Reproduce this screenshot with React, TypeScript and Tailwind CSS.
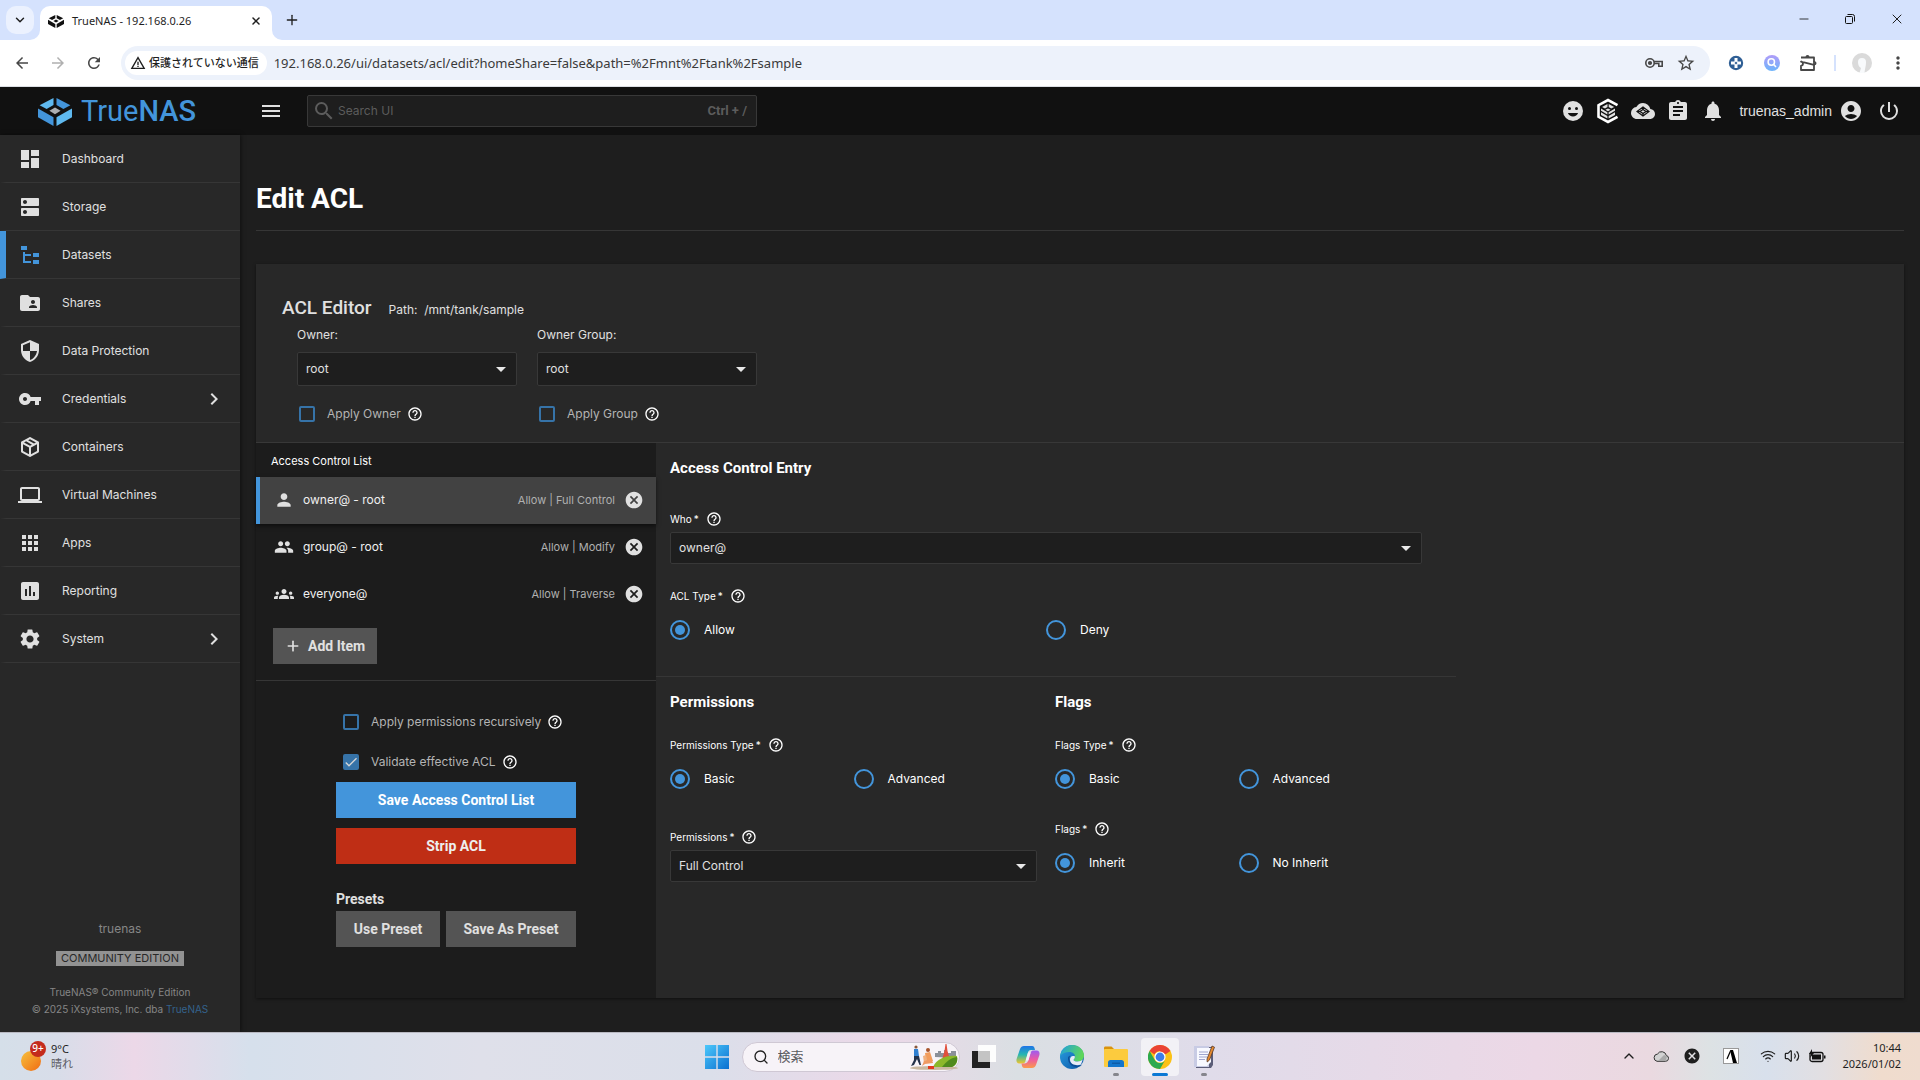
import { ReactNode, useState } from "react";
import classNames from "clsx";
import {
  MdAccountCircle,
  MdApps,
  MdArrowBack,
  MdArrowDropDown,
  MdArrowForward,
  MdAssessment,
  MdAssignment,
  MdCancel,
  MdCheck,
  MdChevronRight,
  MdDashboard,
  MdDns,
  MdFolderShared,
  MdGroup,
  MdGroups,
  MdHelpOutline,
  MdLaptop,
  MdMenu,
  MdMoreVert,
  MdNotifications,
  MdPerson,
  MdPowerSettingsNew,
  MdRefresh,
  MdSearch,
  MdSecurity,
  MdSettings,
  MdStarOutline,
  MdVpnKey,
  MdWarningAmber,
} from "react-icons/md";
import {
  ChevronDown,
  ChevronUp,
  Minus,
  Plus,
  Search,
  Volume2,
  Wifi,
  X,
} from "lucide-react";

const uiFont = "font-['Inter','Noto_Sans_CJK_JP',sans-serif]";
const headFont = "font-['Roboto','Liberation_Sans',sans-serif]";
const osFont = "font-['Noto_Sans','Noto_Sans_CJK_JP',sans-serif]";

/* ---------- drawings ---------- */

function TrueNasMark({ mono, className }: { mono?: boolean; className?: string }) {
  const dark = mono ? "#111" : "#4395db";
  const light = mono ? "#111" : "#5fb9ef";
  return (
    <svg viewBox="0 0 34 28" className={className} aria-hidden="true">
      <path d="M15.500 0v7L8.600 11 1.600 7.200z" fill={light} />
      <path d="M18.500 0v7l6.900 4 7-3.800z" fill={dark} />
      <path d="M17 9.500l5.600 3.300L17 16.200l-5.600-3.400z" fill={mono ? "#111" : "#aeb0b2"} />
      <path d="M0 10.500l15.500 8.700V28L0 19.200z" fill={dark} />
      <path d="M34 10.500l-15.500 8.700V28L34 19.200z" fill={light} />
    </svg>
  );
}

function FileTreeIcon() {
  return (
    <svg viewBox="0 0 24 24" className="size-6" fill="currentColor" aria-hidden="true">
      <path d="M3,3H9V7H3V3M15,10H21V14H15V10M15,17H21V21H15V17M13,13H7V18H13V20H7L5,20V9H7V11H13V13Z" />
    </svg>
  );
}

function PackageIcon() {
  return (
    <svg viewBox="0 0 24 24" className="size-6" fill="currentColor" aria-hidden="true">
      <path d="M21,16.5C21,16.88 20.79,17.21 20.47,17.38L12.57,21.82C12.41,21.94 12.21,22 12,22C11.79,22 11.59,21.94 11.43,21.82L3.53,17.38C3.21,17.21 3,16.88 3,16.5V7.5C3,7.12 3.21,6.79 3.53,6.62L11.43,2.18C11.59,2.06 11.79,2 12,2C12.21,2 12.41,2.06 12.57,2.18L20.47,6.62C20.79,6.79 21,7.12 21,7.5V16.5M12,4.15L10.11,5.22L16,8.61L17.96,7.5L12,4.15M6.04,7.5L12,10.85L13.96,9.75L8.08,6.35L6.04,7.5M5,15.91L11,19.29V12.58L5,9.21V15.91M19,15.91V9.21L13,12.58V19.29L19,15.91Z" />
    </svg>
  );
}

function SmileIcon() {
  return (
    <svg viewBox="0 0 24 24" className="size-6" aria-hidden="true">
      <circle cx="12" cy="12" r="10" fill="#e0e0e0" />
      <circle cx="8.500" cy="9.500" r="1.500" fill="#111" />
      <circle cx="15.500" cy="9.500" r="1.500" fill="#111" />
      <path d="M6.900 14h10.200a5.500 5.500 0 0 1-10.200 0z" fill="#111" />
    </svg>
  );
}

function ConnectIcon() {
  return (
    <svg viewBox="0 0 24 26" className="h-[26px] w-6" aria-hidden="true">
      <path
        d="M21.500 7.200L12 2 2.500 7.200v11.600L12 24l9.500-5.200"
        fill="none"
        stroke="#fff"
        strokeWidth="2.600"
      />
      <path d="M11.500 6v3L9 10.400 6 8.900zM12.700 6v3l2.500 1.400 3-1.500zM12 10.400l2.600 1.400-2.600 1.500-2.600-1.500z" fill="#e0e0e0" />
      <path d="M5 10.500l6.400 3.700v2.200L5 12.800zM5 14.200l6.400 3.700v2.700L5 17zM19 10.500l-6.400 3.700v2.200l6.400-3.600zM19 14.200l-6.400 3.700v2.700L19 17z" fill="#e0e0e0" />
    </svg>
  );
}

function CloudMarkIcon() {
  return (
    <svg viewBox="0 0 24 24" className="size-6" aria-hidden="true">
      <path
        d="M19.350 10.040A7.490 7.490 0 0 0 12 4C9.110 4 6.600 5.640 5.350 8.040A5.990 5.990 0 0 0 0 14c0 3.310 2.690 6 6 6h13c2.760 0 5-2.240 5-5 0-2.640-2.050-4.780-4.650-4.960z"
        fill="#e0e0e0"
      />
      <g fill="none" stroke="#111" strokeWidth="1.200">
        <path d="M12 8l6 4.500-6 4.500-6-4.500zM12 8v2.500M12 17v-2.500M6 12.500h3M18 12.500h-3" />
        <path d="M12 10.500l3 2-3 2-3-2z" />
      </g>
    </svg>
  );
}

function PuzzleIcon() {
  return (
    <svg viewBox="0 0 20 20" className="size-5" fill="none" stroke="currentColor" strokeWidth="1.800" aria-hidden="true">
      <path d="M3 4.500h13v4.200M16 11.800V17H3v-4.200c2.600-.4 2.600-3.700 0-4.100z" strokeLinejoin="round" />
      <path d="M7.500 4a2 2 0 0 1 4 0zM16.500 8.300a2 2 0 0 1 0 4z" fill="currentColor" stroke="none" />
      <path d="M16 8v4.500" />
    </svg>
  );
}

function WindowsLogo() {
  return (
    <svg viewBox="0 0 24 24" className="size-6" aria-hidden="true">
      <defs>
        <linearGradient id="win" x1="0" y1="0" x2="24" y2="24" gradientUnits="userSpaceOnUse">
          <stop offset="0" stopColor="#4cc8fb" />
          <stop offset="1" stopColor="#0a6fd0" />
        </linearGradient>
      </defs>
      <path d="M0 0h11.300v11.300H0zM12.700 0H24v11.300H12.700zM0 12.700h11.300V24H0zM12.700 12.700H24V24H12.700z" fill="url(#win)" />
    </svg>
  );
}

// runners in a park, the little picture inside the search pill
function SearchScene() {
  return (
    <svg viewBox="0 0 48 26" className="h-[26px] w-12" aria-hidden="true">
      <ellipse cx="24" cy="24" rx="24" ry="2" fill="#c9b8a0" />
      <path d="M25 13V9h3V7h3v2h3V6h3v3h4V7h5v7z" fill="#8b9099" />
      <path d="M35.500 0h1l1 7 2 7h-7l2-7z" fill="#e0503c" />
      <path d="M23 23c4-8 12-12 24-11 1 6-1 10-6 11z" fill="#8cb82a" />
      <path d="M32 23c4-5 8-9 15-10 1 4-1 8-5 10z" fill="#4f8a1d" />
      <circle cx="6" cy="3" r="1.600" fill="#8a5a3c" />
      <path d="M4 5h4l1 7H4z" fill="#2f7fd0" />
      <path d="M4 12h5l2 9H9.500L7 15l-3 6-3 1 3-6z" fill="#24324a" />
      <circle cx="18" cy="6" r="2" fill="#a8552c" />
      <path d="M15 9l5-1 3 9h-7z" fill="#f29c5c" />
      <path d="M13 12l3-1 1 5-3 3z" fill="#f0b080" />
      <path d="M14 17l8-1 1 3-8 1-3 2z" fill="#ef9a63" />
      <path d="M18 22h6v3h-6z" fill="#e2391f" />
    </svg>
  );
}

function TaskViewIcon() {
  return (
    <svg viewBox="0 0 24 24" className="size-6" aria-hidden="true">
      <rect x="0" y="6" width="18" height="17" fill="#222" />
      <rect x="6" y="0" width="18" height="17" fill="#fdfdfd" />
      <rect x="6" y="6" width="12" height="11" fill="#c4c4c4" />
    </svg>
  );
}

function CopilotIcon() {
  return (
    <svg viewBox="0 0 24 24" className="size-6" aria-hidden="true">
      <defs>
        <linearGradient id="cpA" x1="0" y1="0" x2="0" y2="1">
          <stop offset="0" stopColor="#1d74e8" />
          <stop offset="0.500" stopColor="#27b8b0" />
          <stop offset="1" stopColor="#f2c52a" />
        </linearGradient>
        <linearGradient id="cpB" x1="0" y1="0" x2="0" y2="1">
          <stop offset="0" stopColor="#9c5cf0" />
          <stop offset="0.500" stopColor="#ec5aa4" />
          <stop offset="1" stopColor="#fb9a4a" />
        </linearGradient>
      </defs>
      <path d="M8 1h8c2 0 2.500 1.500 3 4h-4c-2 0-2.600 1-3 2.500L9.500 16c-.6 2-1.500 2.500-3.500 2.500H3.500C1 18.500 0 16.500.6 14L4 4c.8-2 2-3 4-3z" fill="url(#cpA)" />
      <path d="M16 23H8.500c-2 0-2.500-1.500-3-4.500H8c2.500 0 3.500-1 4-2.500L14.500 8c.6-2 1.500-2.500 3.500-2.500h2.500c2.500 0 3.500 2 2.900 4.500L20 20c-.8 2-2 3-4 3z" fill="url(#cpB)" />
      <path d="M12 7.500h2.700L12.400 15.500H9.700z" fill="#f4f1f6" />
    </svg>
  );
}

function EdgeIcon() {
  return (
    <svg viewBox="0 0 24 24" className="size-6" aria-hidden="true">
      <defs>
        <linearGradient id="edA" x1="0" y1="0" x2="1" y2="0.300">
          <stop offset="0" stopColor="#1f9fe0" />
          <stop offset="1" stopColor="#5ed65a" />
        </linearGradient>
        <linearGradient id="edB" x1="0" y1="0" x2="1" y2="1">
          <stop offset="0" stopColor="#2aa0e2" />
          <stop offset="1" stopColor="#0b54a5" />
        </linearGradient>
      </defs>
      <circle cx="12" cy="12" r="12" fill="url(#edB)" />
      <path d="M.3 11C1 4.500 6 0 12 0c7 0 12 5 12 10.500 0 4-3 6-6.500 6-2.500 0-4-.8-4-1.800 0-.8 1.500-1.200 1.500-3.200 0-2.300-2-4.500-5.500-4.500C5.500 7 2 8.500.3 11z" fill="url(#edA)" />
      <path d="M8 13c0 5 3.500 9 8.500 9 2 0 4-.6 5.500-2-2 .8-11 1-12.500-5-.4-2 .2-3.500 1-4.500C9 11 8 12 8 13z" fill="#0d4d96" />
      <path d="M15 11.500c0-.5 0 2-1.500 3.200 0 1 1.500 1.800 4 1.800 2 0 4-.7 5.200-2L21 19.500c-4 1.500-10.500.5-11-4.500-.2-3 2-5 5-3.500z" fill="#e8ecf6" />
    </svg>
  );
}

function ExplorerIcon() {
  return (
    <svg viewBox="0 0 24 24" className="size-6" aria-hidden="true">
      <path d="M0 3c0-1 .5-1.500 1.500-1.500h6L10 4v4H0z" fill="#d9920c" />
      <rect x="0" y="4" width="24" height="18" rx="1" fill="#fccb3e" />
      <path d="M4 22v-4.500c0-1.500 1-2.500 2.500-2.500h11c1.500 0 2.500 1 2.500 2.500V22z" fill="#1476cc" />
      <rect x="8" y="17.500" width="8" height="1.500" fill="#0e5ca8" />
    </svg>
  );
}

function ChromeIcon() {
  return (
    <svg viewBox="0 0 24 24" className="size-6" aria-hidden="true">
      <circle cx="12" cy="12" r="12" fill="#fbc116" />
      <path d="M1.600 6A12 12 0 0 1 22.400 6H12a6 6 0 0 0-5.500 3.500z" fill="#ea4335" />
      <path d="M1.600 6A12 12 0 0 0 12 24l5.200-9a6 6 0 0 1-10.400 0z" fill="#2da94f" />
      <path d="M22.400 6H12v3h6z" fill="#ea4335" />
      <circle cx="12" cy="12" r="5.600" fill="#fff" />
      <circle cx="12" cy="12" r="4.400" fill="#3e7de8" />
    </svg>
  );
}

function NotepadIcon() {
  return (
    <svg viewBox="0 0 24 24" className="size-6" aria-hidden="true">
      <path d="M4 2h17v18l-2 3H4z" fill="#5b5d78" />
      <path d="M2 1h15v21H2z" fill="#c8cbe4" />
      <path d="M5 3h14v14l-4 4H5z" fill="#f8f9ff" />
      <path d="M7 7h9M7 9.500h9M7 12h8M7 14.500h6" stroke="#9fa4cc" strokeWidth="1" />
      <path d="M20 1l2.500 1.200L17.500 15l-2.300 2-.2-3z" fill="#e58a2f" stroke="#55372a" strokeWidth="0.800" />
    </svg>
  );
}

/* ---------- browser ---------- */

function IconButton({ label, children }: { label: string; children: ReactNode }) {
  return (
    <button type="button" aria-label={label} className="flex shrink-0 items-center justify-center">
      {children}
    </button>
  );
}

function BrowserChrome() {
  return (
    <div className={classNames("text-[#1f1f1f]", osFont)}>
      <div className="flex h-10 items-end bg-[#d5e2fd]">
        <button
          type="button"
          aria-label="Search tabs"
          className="mb-[6px] ml-[6px] flex size-7 items-center justify-center rounded-[10px] bg-[#ebf1fe]"
        >
          <ChevronDown className="size-[14px]" strokeWidth={2.5} />
        </button>
        <svg viewBox="0 0 10 10" className="ml-[-4px] size-[10px]" aria-hidden="true">
          <path d="M10 0v10H0A10 10 0 0 0 10 0z" fill="#fff" />
        </svg>
        <div className="flex h-[34px] w-[232px] items-center rounded-t-[10px] bg-white px-2 pb-1">
          <TrueNasMark mono className="h-[17px] w-4" />
          <span className="ml-2 text-[11px]">TrueNAS - 192.168.0.26</span>
          <button type="button" aria-label="Close tab" className="mr-[2px] ml-auto">
            <X className="size-3" strokeWidth={3} />
          </button>
        </div>
        <svg viewBox="0 0 10 10" className="size-[10px]" aria-hidden="true">
          <path d="M0 0v10h10A10 10 0 0 1 0 0z" fill="#fff" />
        </svg>
        <button type="button" aria-label="New tab" className="mb-3 ml-[2px]">
          <Plus className="size-4" strokeWidth={2} />
        </button>
        <div className="mb-[13px] ml-auto flex items-center gap-8 pr-[15px]">
          <IconButton label="Minimize">
            <Minus className="size-[14px]" strokeWidth={1.5} />
          </IconButton>
          <IconButton label="Restore">
            <svg viewBox="0 0 14 14" className="size-[14px]" fill="none" stroke="#111" aria-hidden="true">
              <rect x="2.500" y="4.500" width="7" height="7" rx="1" />
              <path d="M4.500 2.500h5a2 2 0 0 1 2 2v5" />
            </svg>
          </IconButton>
          <IconButton label="Close">
            <X className="size-4" strokeWidth={1.5} />
          </IconButton>
        </div>
      </div>

      <div className="flex h-[47px] items-center border-b border-[#dcdfe4] bg-white pr-3 pl-[13px] text-[#474747]">
        <div className="flex gap-[18px]">
          <IconButton label="Back">
            <MdArrowBack className="size-[18px]" />
          </IconButton>
          <IconButton label="Forward">
            <MdArrowForward className="size-[18px] text-[#b0b0b0]" />
          </IconButton>
          <IconButton label="Reload">
            <MdRefresh className="size-[18px]" />
          </IconButton>
        </div>
        <div className="ml-[18px] flex h-[34px] flex-1 items-center rounded-full bg-[#edf2fb] pr-[14px] pl-1">
          <button
            type="button"
            className="flex h-6 items-center gap-[3px] rounded-full bg-white pr-2 pl-[5px] text-[11px] font-medium text-[#1f1f1f]"
          >
            <MdWarningAmber className="size-4" />
            保護されていない通信
          </button>
          <input
            aria-label="Address"
            className="ml-[7px] h-6 min-w-0 flex-1 bg-transparent text-[13px] text-[#3a3a3a] outline-none"
            defaultValue="192.168.0.26/ui/datasets/acl/edit?homeShare=false&path=%2Fmnt%2Ftank%2Fsample"
          />
          <div className="flex items-center gap-3">
            <IconButton label="Passwords">
              <svg viewBox="0 0 20 20" className="size-5" fill="none" stroke="currentColor" strokeWidth="1.600" aria-hidden="true">
                <circle cx="6" cy="10" r="4.200" />
                <circle cx="6" cy="10" r="1.300" fill="currentColor" />
                <path d="M10 8.500h8.200v4.700h-3.400v-2.700H10" />
              </svg>
            </IconButton>
            <IconButton label="Bookmark">
              <MdStarOutline className="size-5" />
            </IconButton>
          </div>
        </div>
        <div className="ml-[18px] flex items-center">
          <IconButton label="Extension">
            <svg viewBox="0 0 16 16" className="size-4" aria-hidden="true">
              <circle cx="8" cy="8" r="7.200" fill="#2f5f95" />
              <path d="M8 3v10M3 8h10" stroke="#fff" strokeWidth="3" />
              <path d="M8 6.500L9.500 8 8 9.500 6.500 8z" fill="#2f5f95" />
            </svg>
          </IconButton>
          <span className="ml-5">
            <IconButton label="Lens">
              <svg viewBox="0 0 16 16" className="size-4" aria-hidden="true">
                <defs>
                  <linearGradient id="lens" x1="0" y1="0" x2="0" y2="1">
                    <stop offset="0" stopColor="#b09cf8" />
                    <stop offset="1" stopColor="#6db4fb" />
                  </linearGradient>
                </defs>
                <circle cx="8" cy="8" r="8" fill="url(#lens)" />
                <circle cx="7.300" cy="7" r="3.200" fill="none" stroke="#fff" strokeWidth="1.500" />
                <path d="M9.700 9.500l2.300 2.500" stroke="#fff" strokeWidth="1.600" />
              </svg>
            </IconButton>
          </span>
          <span className="ml-[18px]">
            <IconButton label="Extensions">
              <PuzzleIcon />
            </IconButton>
          </span>
          <span className="mx-4 h-4 w-[2px] bg-[#d5e2fd]" />
          <IconButton label="Profile">
            <svg viewBox="0 0 20 20" className="size-5" aria-hidden="true">
              <circle cx="10" cy="10" r="10" fill="#dadada" />
              <path d="M6 9a4 4 0 0 1 8 0c0 4-1 6-1.500 11h-5L9 15C7 14 6 12 6 9z" fill="#f8fafc" />
            </svg>
          </IconButton>
          <span className="ml-4">
            <IconButton label="Menu">
              <MdMoreVert className="size-5" />
            </IconButton>
          </span>
        </div>
      </div>
    </div>
  );
}

/* ---------- TrueNAS shell ---------- */

function TopBar() {
  return (
    <header className="flex h-12 items-center bg-[#111111] text-[#e0e0e0]">
      <a href="#" className="flex h-full w-60 items-center pt-px pl-[38px] text-[#4395db]">
        <TrueNasMark className="h-7 w-[34px]" />
        <span className={classNames("ml-[9px] text-[29px] leading-none", headFont)}>
          True<span className="font-medium">NAS</span>
        </span>
      </a>
      <button type="button" aria-label="Toggle menu" className="ml-[19px]">
        <MdMenu className="size-6" />
      </button>
      <label className="ml-6 flex h-8 w-[450px] items-center rounded-[2px] border border-[#383838] bg-[#1e1e1e] pr-[9px] pl-1 text-[#5c5c5c]">
        <MdSearch className="size-6" />
        <input
          type="text"
          aria-label="Search UI"
          placeholder="Search UI"
          className="ml-[2px] min-w-0 flex-1 bg-transparent text-xs outline-none placeholder:text-[#5c5c5c]"
        />
        <span className={classNames("text-[13px] font-bold", headFont)}>Ctrl + /</span>
      </label>
      <div className="mr-[19px] ml-auto flex items-center gap-[11px]">
        <IconButton label="Feedback">
          <SmileIcon />
        </IconButton>
        <IconButton label="TrueNAS Connect">
          <ConnectIcon />
        </IconButton>
        <IconButton label="TrueCommand">
          <CloudMarkIcon />
        </IconButton>
        <IconButton label="Jobs">
          <MdAssignment className="size-6" />
        </IconButton>
        <IconButton label="Alerts">
          <MdNotifications className="size-6" />
        </IconButton>
        <button
          type="button"
          className="ml-[3px] flex items-center gap-[7px] font-['Liberation_Sans',Arial,sans-serif] text-sm"
        >
          truenas_admin
          <MdAccountCircle className="size-6" />
        </button>
        <span className="ml-[3px]">
          <IconButton label="Power">
            <MdPowerSettingsNew className="size-6" />
          </IconButton>
        </span>
      </div>
    </header>
  );
}

const navItems: { label: string; icon: ReactNode; nested?: boolean; active?: boolean }[] = [
  { label: "Dashboard", icon: <MdDashboard className="size-6" /> },
  { label: "Storage", icon: <MdDns className="size-6" /> },
  { label: "Datasets", icon: <FileTreeIcon />, active: true },
  { label: "Shares", icon: <MdFolderShared className="size-6" /> },
  { label: "Data Protection", icon: <MdSecurity className="size-6" /> },
  { label: "Credentials", icon: <MdVpnKey className="size-6" />, nested: true },
  { label: "Containers", icon: <PackageIcon /> },
  { label: "Virtual Machines", icon: <MdLaptop className="size-6" /> },
  { label: "Apps", icon: <MdApps className="size-6" /> },
  { label: "Reporting", icon: <MdAssessment className="size-6" /> },
  { label: "System", icon: <MdSettings className="size-6" />, nested: true },
];

function Sidebar() {
  return (
    <aside className="flex w-60 shrink-0 flex-col bg-[#282828] text-[#e0e0e0] shadow-[1px_0_4px_rgba(0,0,0,0.5)]">
      <nav>
        {navItems.map((item) => (
          <a
            key={item.label}
            href="#"
            className={classNames(
              "flex h-12 items-center border-b border-l-[6px] border-b-[#363636] pr-[14px] pl-3 text-xs",
              item.active ? "border-l-[#4395db]" : "border-l-transparent"
            )}
          >
            <span className={item.active ? "text-[#4395db]" : ""}>{item.icon}</span>
            <span className="ml-5">{item.label}</span>
            {item.nested && <MdChevronRight className="ml-auto size-6" />}
          </a>
        ))}
      </nav>
      <div className="mt-auto flex flex-col items-center pb-[14px] text-[#868686]">
        <div className="text-xs">truenas</div>
        <div className="mt-[14px] bg-[#929292] px-[5px] text-[11px] leading-[15px] text-[#282828]">
          COMMUNITY EDITION
        </div>
        <div className="mt-[18px] text-center text-[10px] leading-[17px]">
          TrueNAS® Community Edition
          <br />© 2025 iXsystems, Inc. dba{" "}
          <a href="#" className="text-[#34628c]">
            TrueNAS
          </a>
        </div>
      </div>
    </aside>
  );
}

/* ---------- form bits ---------- */

function Help() {
  return (
    <button type="button" aria-label="Help" className="text-white">
      <MdHelpOutline className="size-4" />
    </button>
  );
}

function Select({ id, options, className }: { id: string; options: string[]; className?: string }) {
  return (
    <div className={classNames("relative", className)}>
      <select
        id={id}
        className="size-full appearance-none rounded-[2px] border border-[#383838] bg-[#1e1e1e] px-2 text-xs text-[#e0e0e0] outline-none"
      >
        {options.map((o) => (
          <option key={o}>{o}</option>
        ))}
      </select>
      <MdArrowDropDown className="pointer-events-none absolute top-1/2 right-1 size-6 -translate-y-1/2 text-[#e8e8e8]" />
    </div>
  );
}

function Checkbox({ label, checked }: { label: string; checked?: boolean }) {
  return (
    <div className="flex h-6 items-center gap-[6px]">
      <label className="flex items-center text-xs text-[#b4b4b4]">
        <span className="grid size-4">
          <input
            type="checkbox"
            defaultChecked={checked}
            className="peer col-start-1 row-start-1 size-4 appearance-none rounded-[2px] border-2 border-[#3673a8] checked:bg-[#3673a8]"
          />
          <MdCheck className="pointer-events-none invisible col-start-1 row-start-1 size-4 text-[#d6d6d6] peer-checked:visible" />
        </span>
        <span className="ml-3">{label}</span>
      </label>
      <Help />
    </div>
  );
}

function RadioGroup({ name, label, options }: { name: string; label: string; options: string[] }) {
  const [value, setValue] = useState(options[0]);
  return (
    <fieldset>
      <legend className="flex h-5 items-center gap-[7px] text-[10px] text-white">
        <span className="flex gap-[2px]">
          {label}
          <span>*</span>
        </span>
        <Help />
      </legend>
      <div className="mt-[14px] grid grid-cols-2">
        {options.map((o) => (
          <label key={o} className="flex h-5 items-center gap-[14px] text-xs text-white">
            <input
              type="radio"
              name={name}
              checked={value === o}
              onChange={() => setValue(o)}
              className="size-5 appearance-none rounded-full border-2 border-[#4395db] bg-clip-content p-[3px] checked:bg-[#4395db]"
            />
            {o}
          </label>
        ))}
      </div>
    </fieldset>
  );
}

function FieldLabel({ htmlFor, children }: { htmlFor: string; children: ReactNode }) {
  return (
    <div className="flex h-5 items-center gap-[7px] text-[10px] text-white">
      <label htmlFor={htmlFor} className="flex gap-[2px]">
        {children}
        <span>*</span>
      </label>
      <Help />
    </div>
  );
}

/* ---------- ACL editor ---------- */

const aces = [
  { who: "owner@ - root", access: "Allow | Full Control", Icon: MdPerson, active: true },
  { who: "group@ - root", access: "Allow | Modify", Icon: MdGroup },
  { who: "everyone@", access: "Allow | Traverse", Icon: MdGroups },
];

function OwnerField({ id, label, apply }: { id: string; label: string; apply: string }) {
  return (
    <div className="w-[220px]">
      <label htmlFor={id} className="block pt-[7px] text-xs text-[#e0e0e0]">
        {label}
      </label>
      <Select id={id} options={["root"]} className="mt-[9px] mb-4 h-[34px]" />
      <div className="pl-[2px]">
        <Checkbox label={apply} />
      </div>
    </div>
  );
}

function EditorHeader() {
  return (
    <div className="h-[179px] border-b border-[#383838] px-[26px] pt-8">
      <div className="flex items-baseline gap-[17px] text-[#e0e0e0]">
        <h2 className={classNames("text-[19px] leading-6 font-medium", headFont)}>ACL Editor</h2>
        <div className="text-xs">Path:&nbsp; /mnt/tank/sample</div>
      </div>
      <div className="flex gap-5 pl-[15px]">
        <OwnerField id="owner" label="Owner:" apply="Apply Owner" />
        <OwnerField id="group" label="Owner Group:" apply="Apply Group" />
      </div>
    </div>
  );
}

function AccessControlList() {
  return (
    <div className="w-[400px] shrink-0 bg-[#1c1c1c]">
      <div className="border-b border-[#363636] pb-4">
        <h3 className="pt-[6px] pb-1 pl-[15px] text-[11px] leading-6 text-white">Access Control List</h3>
        <ul>
          {aces.map(({ who, access, Icon, active }) => (
            <li
              key={who}
              className={classNames(
                "flex h-[47px] items-center border-l-4 pr-3 pb-px",
                active
                  ? "border-[#4395db] bg-[#424242] shadow-[0_2px_4px_rgba(0,0,0,0.5)]"
                  : "border-transparent"
              )}
            >
              <Icon className="ml-[14px] size-5 text-[#e0e0e0]" />
              <span className="ml-[9px] text-xs text-[#f0f0f0]">{who}</span>
              <span className="ml-auto text-[11px] text-[#b0b0b0]">{access}</span>
              <button type="button" aria-label={"Remove " + who} className="ml-[9px]">
                <MdCancel className="size-5 text-[#e0e0e0]" />
              </button>
            </li>
          ))}
        </ul>
        <button
          type="button"
          className={classNames(
            "mt-[10px] ml-[17px] flex h-9 items-center gap-[7px] bg-[#545454] px-3 text-sm font-bold text-[#e0e0e0]",
            headFont
          )}
        >
          <Plus className="size-4" strokeWidth={2.5} />
          Add Item
        </button>
      </div>

      <div className="mx-auto w-60 pt-[29px]">
        <div className="flex flex-col gap-4 pl-[7px]">
          <Checkbox label="Apply permissions recursively" />
          <Checkbox label="Validate effective ACL" checked />
        </div>
        <div className={classNames("mt-2 flex flex-col gap-[10px] text-sm font-bold", headFont)}>
          <button type="button" className="h-9 bg-[#4395db] text-white">
            Save Access Control List
          </button>
          <button type="button" className="h-9 bg-[#bf2e15] text-[#eeeeee]">
            Strip ACL
          </button>
        </div>
        <h4 className={classNames("mt-6 pb-px text-sm leading-[22px] font-bold text-[#e0e0e0]", headFont)}>
          Presets
        </h4>
        <div className={classNames("flex gap-[6px] text-sm font-bold text-[#e0e0e0]", headFont)}>
          <button type="button" className="h-9 w-[104px] bg-[#545454]">
            Use Preset
          </button>
          <button type="button" className="h-9 flex-1 bg-[#545454]">
            Save As Preset
          </button>
        </div>
      </div>
    </div>
  );
}

function AccessControlEntry() {
  const title = classNames("text-[15px] leading-5 font-bold text-white", headFont);

  return (
    <div className="w-full max-w-[800px]">
      <section className="border-b border-[#363636] pt-[15px] pr-[34px] pb-9 pl-[14px]">
        <h3 className={title}>Access Control Entry</h3>
        <div className="mt-[31px] mb-[22px]">
          <FieldLabel htmlFor="who">Who</FieldLabel>
          <Select id="who" options={["owner@", "group@", "everyone@"]} className="mt-[3px] h-8" />
        </div>
        <RadioGroup name="aclType" label="ACL Type" options={["Allow", "Deny"]} />
      </section>
      <section className="grid grid-cols-2 gap-[18px] pt-[15px] pr-[34px] pl-[14px]">
        <div>
          <h3 className={title}>Permissions</h3>
          <div className="mt-[23px] mb-[38px]">
            <RadioGroup name="permType" label="Permissions Type" options={["Basic", "Advanced"]} />
          </div>
          <FieldLabel htmlFor="perms">Permissions</FieldLabel>
          <Select id="perms" options={["Full Control", "Modify", "Read", "Traverse"]} className="mt-[3px] h-8" />
        </div>
        <div>
          <h3 className={title}>Flags</h3>
          <div className="mt-[23px] mb-[30px]">
            <RadioGroup name="flagsType" label="Flags Type" options={["Basic", "Advanced"]} />
          </div>
          <RadioGroup name="flags" label="Flags" options={["Inherit", "No Inherit"]} />
        </div>
      </section>
    </div>
  );
}

/* ---------- taskbar ---------- */

function TaskIcon({ label, mark, active, children }: { label: string; mark?: boolean; active?: boolean; children: ReactNode }) {
  return (
    <button
      type="button"
      aria-label={label}
      className={classNames(
        "mx-px flex h-[38px] w-[38px] flex-col items-center rounded-[4px] pt-[7px]",
        active && "bg-white/60"
      )}
    >
      {children}
      {mark && (
        <span
          className={classNames(
            "mt-1 h-[3px] rounded-full",
            active ? "w-4 bg-[#0b78d4]" : "w-[6px] bg-[#85858c]"
          )}
        />
      )}
    </button>
  );
}

function Taskbar() {
  return (
    <footer
      className={classNames(
        "grid h-12 shrink-0 grid-cols-[1fr_auto_1fr] items-center border-t border-[#b9b9c2] bg-[linear-gradient(to_right,#d5dfe9_0%,#d8dde9_3%,#ecd8e8_7%,#d6e0ec_13%,#dfe0ea_25%,#dbdfea_37%,#ecd8e8_46%,#dadfe3_53%,#e0dcea_63%,#ecd8e6_80%,#ead9e0_86%,#dde2e4_89%,#d8e0ec_92%,#e2dfe2_95%,#f0dccd_98%,#efdccf_100%)] text-[#1f1f1f]",
        osFont
      )}
    >
      <button type="button" className="flex items-center pl-[21px] text-left">
        <span className="relative size-6">
          <span className="absolute top-[6px] left-0 size-5 rounded-full bg-linear-to-br from-[#f5c03c] to-[#ef6a10]" />
          <span className="absolute -top-1 left-[9px] flex size-4 items-center justify-center rounded-full bg-[#c42b1c] text-[10px] font-medium text-white">
            9+
          </span>
        </span>
        <span className="ml-[6px] pb-[2px] text-[11px] leading-[15px]">
          9°C
          <br />
          <span className="text-[#5a5a62]">晴れ</span>
        </span>
      </button>

      <div className="ml-2 flex items-center gap-1">
        <button type="button" aria-label="Start" className="mr-[9px]">
          <WindowsLogo />
        </button>
        <label className="flex h-[30px] w-[218px] items-center rounded-full border border-[#cfc8d4] bg-[#f7f3f8] pr-[1px] pl-[10px]">
          <Search className="size-4 text-[#222]" />
          <input
            type="text"
            placeholder="検索"
            aria-label="検索"
            className="ml-[9px] min-w-0 flex-1 bg-transparent text-[13px] outline-none placeholder:text-[#5a5a5e]"
          />
          <SearchScene />
        </label>
        <TaskIcon label="Task view">
          <TaskViewIcon />
        </TaskIcon>
        <TaskIcon label="Copilot">
          <CopilotIcon />
        </TaskIcon>
        <TaskIcon label="Edge">
          <EdgeIcon />
        </TaskIcon>
        <TaskIcon label="Explorer" mark>
          <ExplorerIcon />
        </TaskIcon>
        <TaskIcon label="Chrome" mark active>
          <ChromeIcon />
        </TaskIcon>
        <TaskIcon label="Editor" mark>
          <NotepadIcon />
        </TaskIcon>
      </div>

      <div className="flex items-center justify-end pr-[19px] pb-[2px]">
        <ChevronUp className="size-4" />
        <svg viewBox="0 0 16 12" className="ml-4 h-3 w-4" aria-hidden="true">
          <path d="M4 11.300h8.500a3 3 0 0 0 .8-5.900A4.800 4.800 0 0 0 4.500 4a3.700 3.700 0 0 0-.5 7.300z" fill="#d2d2d2" stroke="#333" />
          <path d="M5 11l6-6 3 1-1 5z" fill="#a9a9a9" />
        </svg>
        <MdCancel className="ml-[14px] size-[18px]" />
        <svg viewBox="0 0 16 16" className="ml-[22px] size-4" aria-hidden="true">
          <rect x="0.500" y="0.500" width="15" height="15" fill="#fff" stroke="#999" />
          <path d="M7 2h3l4 13h-4z" fill="#000" />
          <path d="M7.500 3L4 11" stroke="#000" strokeWidth="1.200" />
        </svg>
        <button type="button" aria-label="Quick settings" className="ml-[21px] flex items-center gap-2">
          <Wifi className="size-4" strokeWidth={1.8} />
          <Volume2 className="size-4" strokeWidth={1.8} />
          <svg viewBox="0 0 18 14" className="h-[14px] w-[18px]" aria-hidden="true">
            <rect x="2" y="3.500" width="13" height="9" rx="2" fill="none" stroke="#111" strokeWidth="1.300" />
            <rect x="4" y="5.500" width="9" height="5" fill="#111" />
            <path d="M16 6.500h1.500v3H16z" fill="#111" />
            <path d="M4 0L1 5h2L2 9l4-5H4z" fill="#111" />
          </svg>
        </button>
        <div className="ml-4 text-right text-[11px] leading-4">
          10:44
          <br />
          2026/01/02
        </div>
      </div>
    </footer>
  );
}

export default function App() {
  return (
    <div className="flex min-h-screen flex-col bg-[#1e1e1e]">
      <BrowserChrome />
      <div className={classNames("flex flex-1 flex-col", uiFont)}>
        <TopBar />
        <div className="flex flex-1">
          <Sidebar />
          <main className="flex min-w-0 flex-1 flex-col px-4 pb-[34px]">
            <h1
              className={classNames(
                "border-b border-[#363636] pt-12 pb-[15px] text-[28px] leading-8 font-bold text-white",
                headFont
              )}
            >
              Edit ACL
            </h1>
            <div className="mt-[33px] flex flex-1 flex-col bg-[#282828] shadow-[0_1px_3px_rgba(0,0,0,0.5)]">
              <EditorHeader />
              <div className="flex flex-1">
                <AccessControlList />
                <AccessControlEntry />
              </div>
            </div>
          </main>
        </div>
      </div>
      <Taskbar />
    </div>
  );
}
